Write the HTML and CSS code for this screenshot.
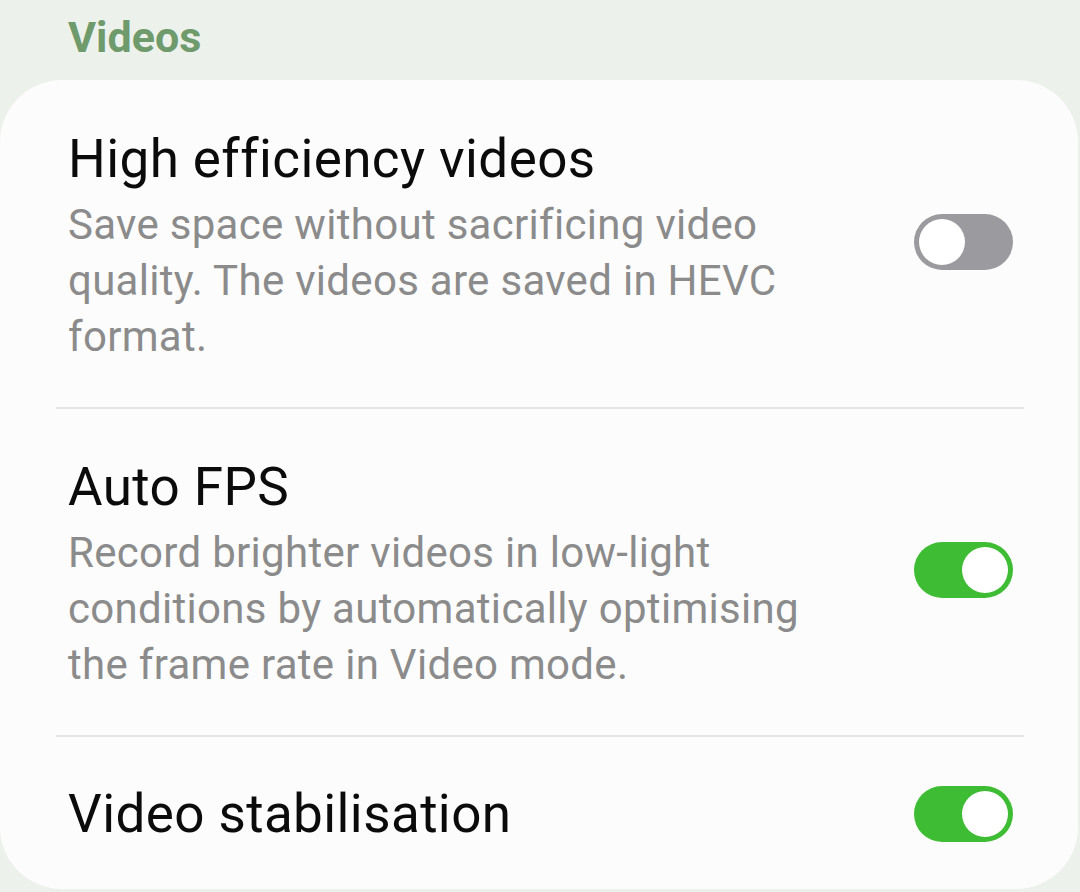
FILE: index.html
```html
<!DOCTYPE html>
<html lang="en">
<head>
<meta charset="utf-8">
<title>Videos settings</title>
<link rel="stylesheet" href="styles.css">
</head>
<body>
<div class="screen">
  <h2 class="section-title">Videos</h2>
  <div class="card">
    <div class="row first">
      <div class="texts">
        <div class="title">High efficiency videos</div>
        <div class="desc">Save space without sacrificing video quality. The videos are saved in HEVC format.</div>
      </div>
      <div class="switch off raised"><span class="thumb"></span></div>
    </div>
    <div class="divider"></div>
    <div class="row middle">
      <div class="texts">
        <div class="title">Auto FPS</div>
        <div class="desc">Record brighter videos in low-light conditions by automatically optimising the frame rate in Video mode.</div>
      </div>
      <div class="switch on raised"><span class="thumb"></span></div>
    </div>
    <div class="divider"></div>
    <div class="row last">
      <div class="texts">
        <div class="title">Video stabilisation</div>
      </div>
      <div class="switch on"><span class="thumb"></span></div>
    </div>
  </div>
</div>
</body>
</html>
```
FILE: styles.css
```css
html, body {
  margin: 0;
  padding: 0;
  background: #edf1eb;
}
body {
  font-family: Roboto, "Noto Sans", sans-serif;
  width: 1080px;
  height: 892px;
  overflow: hidden;
}
.screen {
  display: flex;
  flex-direction: column;
}
.section-title {
  margin: 0;
  padding: 14px 0 0 68px;
  height: 80px;
  box-sizing: border-box;
  font-size: 43px;
  line-height: 46px;
  font-weight: 700;
  color: #6f9a6c;
}
.card {
  background: #fcfcfc;
  border-radius: 62px;
  width: 1078px;
  display: flex;
  flex-direction: column;
}
.row {
  display: flex;
  align-items: center;
  justify-content: space-between;
  padding: 0 68px 0 68px;
}
.row.first {
  padding-top: 49px;
  padding-bottom: 42px;
}
.row.middle {
  padding-top: 48px;
  padding-bottom: 42px;
}
.row.last {
  padding-top: 47px;
  padding-bottom: 45px;
}
.texts {
  width: 780px;
}
.title {
  font-size: 53px;
  line-height: 60px;
  letter-spacing: 0.4px;
  color: #0b0b0b;
}
.desc {
  margin-top: 8px;
  font-size: 42px;
  line-height: 56px;
  letter-spacing: 0.3px;
  color: #8b8b8b;
  width: 750px;
}
.divider {
  height: 2px;
  background: #e6e6e6;
  margin: 0 54px 0 56px;
}
.switch {
  width: 99px;
  height: 56px;
  border-radius: 28px;
  box-sizing: border-box;
  padding: 5px;
  display: flex;
  flex-shrink: 0;
  margin-right: -3px;
}
.switch.raised {
  margin-bottom: 11px;
}
.switch.off {
  background: #9b9b9f;
  justify-content: flex-start;
}
.switch.on {
  background: #3ebd34;
  justify-content: flex-end;
}
.thumb {
  width: 46px;
  height: 46px;
  border-radius: 50%;
  background: #ffffff;
}
```
